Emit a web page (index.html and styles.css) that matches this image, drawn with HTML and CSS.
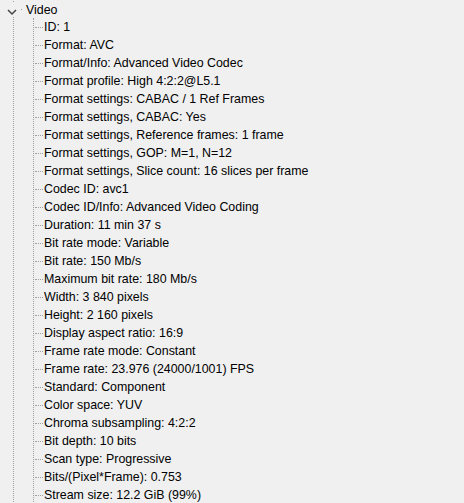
FILE: index.html
```html
<!DOCTYPE html>
<html>
<head>
<meta charset="utf-8">
<link rel="stylesheet" href="styles.css">
</head>
<body>
<div class="tree">
  <div class="node">
    <div class="row">
      <span class="toggle"><svg width="16" height="18" viewBox="0 0 16 18"><path d="M4 9 L8 13 L12 9" fill="none" stroke="#454545" stroke-width="1.5"/></svg></span>
      <span class="dot"></span>
      <span class="label">Video</span>
    </div>
    <ul class="children">
      <li>ID: 1</li>
      <li>Format: AVC</li>
      <li>Format/Info: Advanced Video Codec</li>
      <li>Format profile: High 4:2:2@L5.1</li>
      <li>Format settings: CABAC / 1 Ref Frames</li>
      <li>Format settings, CABAC: Yes</li>
      <li>Format settings, Reference frames: 1 frame</li>
      <li>Format settings, GOP: M=1, N=12</li>
      <li>Format settings, Slice count: 16 slices per frame</li>
      <li>Codec ID: avc1</li>
      <li>Codec ID/Info: Advanced Video Coding</li>
      <li>Duration: 11 min 37 s</li>
      <li>Bit rate mode: Variable</li>
      <li>Bit rate: 150 Mb/s</li>
      <li>Maximum bit rate: 180 Mb/s</li>
      <li>Width: 3 840 pixels</li>
      <li>Height: 2 160 pixels</li>
      <li>Display aspect ratio: 16:9</li>
      <li>Frame rate mode: Constant</li>
      <li>Frame rate: 23.976 (24000/1001) FPS</li>
      <li>Standard: Component</li>
      <li>Color space: YUV</li>
      <li>Chroma subsampling: 4:2:2</li>
      <li>Bit depth: 10 bits</li>
      <li>Scan type: Progressive</li>
      <li>Bits/(Pixel*Frame): 0.753</li>
      <li>Stream size: 12.2 GiB (99%)</li>
      <li class="more"></li>
    </ul>
  </div>
</div>
</body>
</html>
```
FILE: styles.css
```css
html, body {
  margin: 0;
  padding: 0;
  background: #f0f0f0;
  height: 503px;
  overflow: hidden;
}
.tree {
  position: relative;
  font-family: "Liberation Sans", Arial, sans-serif;
  font-size: 12.4px;
  color: #000;
  min-height: 503px;
}
.tree::before {
  content: "";
  position: absolute;
  left: 13px;
  top: 1px;
  bottom: 0;
  border-left: 1px dotted #a0a0a0;
}
.row {
  position: relative;
  display: flex;
  align-items: center;
  height: 18px;
}
.toggle {
  display: block;
  margin-left: 4px;
  width: 16px;
  height: 15px;
  background: #f0f0f0;
  z-index: 1;
}
.toggle svg {
  display: block;
  margin-top: -1px;
}
.dot {
  width: 1px;
  height: 1px;
  margin-left: 1px;
  background: #a0a0a0;
}
.label {
  margin-left: 4px;
  line-height: 18px;
  padding-top: 1px;
}
.children {
  list-style: none;
  margin: 0 0 0 33px;
  padding: 0;
  border-left: 1px dotted #a0a0a0;
  position: relative;
  z-index: 1;
}
.children li {
  position: relative;
  height: 18px;
  line-height: 19px;
  padding-left: 10px;
  white-space: nowrap;
}
.children li::before {
  content: "";
  position: absolute;
  left: 1px;
  top: 9px;
  width: 8px;
  border-top: 1px dotted #a0a0a0;
}
.children li.more::before {
  display: none;
}
```
